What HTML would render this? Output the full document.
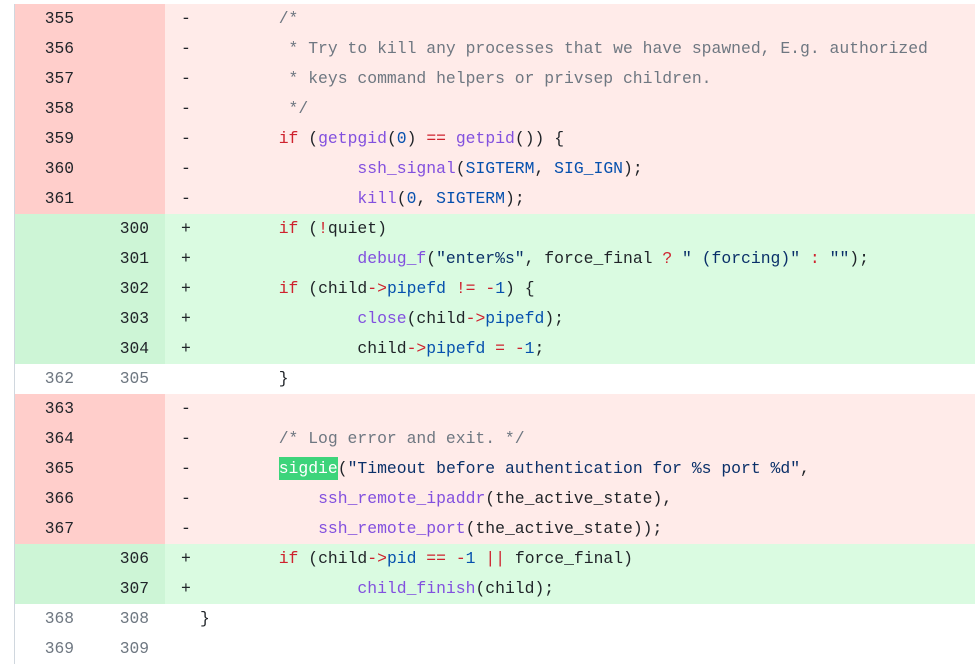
<!DOCTYPE html>
<html><head><meta charset="utf-8"><style>
body{margin:0;background:#fff;width:975px;height:661px;overflow:hidden;font-family:"Liberation Mono",monospace;font-size:16.4px;}
.wrap{position:absolute;left:14px;top:4px;width:961px;border-left:1px solid #d0d7de;}
.r{height:30px;line-height:30px;display:flex;white-space:pre;tab-size:8;-moz-tab-size:8;}
.n{width:75px;box-sizing:border-box;text-align:right;padding-right:16px;color:#6e7781;flex:none;font-size:16.3px}
.g{width:35px;box-sizing:border-box;flex:none;padding-left:16px;color:#1f2328}
.c{flex:1;color:#1f2328}
.d .n{background:#ffcecb;color:#1f2328}.d .c,.d .g{background:#ffebe9}
.a .n{background:#cdf5d6;color:#1f2328}.a .c,.a .g{background:#dafbe1}
.k{color:#cf222e}.f{color:#8250df}.b{color:#0550ae}.m{color:#6e7781}.s{color:#0a3069}
.h{background:#3dd47b;color:#fff;padding:2px 0}
</style></head><body><div class="wrap">
<div class="r d"><div class="n">355</div><div class="n"></div><div class="g">-</div><div class="c">	<span class="m">/*</span></div></div>
<div class="r d"><div class="n">356</div><div class="n"></div><div class="g">-</div><div class="c">	<span class="m"> * Try to kill any processes that we have spawned, E.g. authorized</span></div></div>
<div class="r d"><div class="n">357</div><div class="n"></div><div class="g">-</div><div class="c">	<span class="m"> * keys command helpers or privsep children.</span></div></div>
<div class="r d"><div class="n">358</div><div class="n"></div><div class="g">-</div><div class="c">	<span class="m"> */</span></div></div>
<div class="r d"><div class="n">359</div><div class="n"></div><div class="g">-</div><div class="c">	<span class="k">if</span> (<span class="f">getpgid</span>(<span class="b">0</span>) <span class="k">==</span> <span class="f">getpid</span>()) {</div></div>
<div class="r d"><div class="n">360</div><div class="n"></div><div class="g">-</div><div class="c">		<span class="f">ssh_signal</span>(<span class="b">SIGTERM</span>, <span class="b">SIG_IGN</span>);</div></div>
<div class="r d"><div class="n">361</div><div class="n"></div><div class="g">-</div><div class="c">		<span class="f">kill</span>(<span class="b">0</span>, <span class="b">SIGTERM</span>);</div></div>
<div class="r a"><div class="n"></div><div class="n">300</div><div class="g">+</div><div class="c">	<span class="k">if</span> (<span class="k">!</span>quiet)</div></div>
<div class="r a"><div class="n"></div><div class="n">301</div><div class="g">+</div><div class="c">		<span class="f">debug_f</span>(<span class="s">"enter%s"</span>, force_final <span class="k">?</span> <span class="s">" (forcing)"</span> <span class="k">:</span> <span class="s">""</span>);</div></div>
<div class="r a"><div class="n"></div><div class="n">302</div><div class="g">+</div><div class="c">	<span class="k">if</span> (child<span class="k">-&gt;</span><span class="b">pipefd</span> <span class="k">!=</span> <span class="k">-</span><span class="b">1</span>) {</div></div>
<div class="r a"><div class="n"></div><div class="n">303</div><div class="g">+</div><div class="c">		<span class="f">close</span>(child<span class="k">-&gt;</span><span class="b">pipefd</span>);</div></div>
<div class="r a"><div class="n"></div><div class="n">304</div><div class="g">+</div><div class="c">		child<span class="k">-&gt;</span><span class="b">pipefd</span> <span class="k">=</span> <span class="k">-</span><span class="b">1</span>;</div></div>
<div class="r"><div class="n">362</div><div class="n">305</div><div class="g"> </div><div class="c">	}</div></div>
<div class="r d"><div class="n">363</div><div class="n"></div><div class="g">-</div><div class="c"> </div></div>
<div class="r d"><div class="n">364</div><div class="n"></div><div class="g">-</div><div class="c">	<span class="m">/* Log error and exit. */</span></div></div>
<div class="r d"><div class="n">365</div><div class="n"></div><div class="g">-</div><div class="c">	<span class="h">sigdie</span>(<span class="s">"Timeout before authentication for %s port %d"</span>,</div></div>
<div class="r d"><div class="n">366</div><div class="n"></div><div class="g">-</div><div class="c">	    <span class="f">ssh_remote_ipaddr</span>(the_active_state),</div></div>
<div class="r d"><div class="n">367</div><div class="n"></div><div class="g">-</div><div class="c">	    <span class="f">ssh_remote_port</span>(the_active_state));</div></div>
<div class="r a"><div class="n"></div><div class="n">306</div><div class="g">+</div><div class="c">	<span class="k">if</span> (child<span class="k">-&gt;</span><span class="b">pid</span> <span class="k">==</span> <span class="k">-</span><span class="b">1</span> <span class="k">||</span> force_final)</div></div>
<div class="r a"><div class="n"></div><div class="n">307</div><div class="g">+</div><div class="c">		<span class="f">child_finish</span>(child);</div></div>
<div class="r"><div class="n">368</div><div class="n">308</div><div class="g"> </div><div class="c">}</div></div>
<div class="r"><div class="n">369</div><div class="n">309</div><div class="g"> </div><div class="c"> </div></div>
</div></body></html>
